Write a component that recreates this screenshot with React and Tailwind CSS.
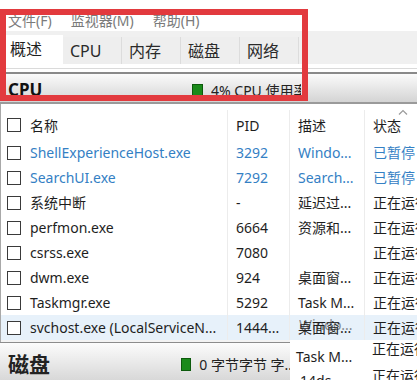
import React from "react";

const rows = [
  { name: "ShellExperienceHost.exe", pid: "3292", desc: "Windo...", status: "已暂停", blue: true },
  { name: "SearchUI.exe", pid: "7292", desc: "Search...", status: "已暂停", blue: true },
  { name: "系统中断", pid: "-", desc: "延迟过...", status: "正在运行" },
  { name: "perfmon.exe", pid: "6664", desc: "资源和...", status: "正在运行" },
  { name: "csrss.exe", pid: "7080", desc: "", status: "正在运行" },
  { name: "dwm.exe", pid: "924", desc: "桌面窗...", status: "正在运行" },
  { name: "Taskmgr.exe", pid: "5292", desc: "Task M...", status: "正在运行" },
  { name: "svchost.exe (LocalServiceN...", pid: "1444...", desc: "桌面窗...", status: "正在运行", sel: true, ghost: "Windo..." },
];

function Box() {
  return <span className="w-[14px] h-[14px] border border-[#3a3a3a] bg-white shrink-0" />;
}

export default function App() {
  return (
    <div className="relative w-[417px] h-[380px] overflow-hidden bg-white font-[Noto_Sans,Noto_Sans_CJK_SC,sans-serif] text-[#1e1e1e]">
      {/* menu */}
      <div className="h-[31px] flex items-end pb-[1px] pl-[8px] gap-[19px] text-[14px] leading-[18px] text-[#7a7a7a]">
        <span>文件(F)</span>
        <span>监视器(M)</span>
        <span>帮助(H)</span>
      </div>
      {/* tabs */}
      <div className="h-[33px] bg-[#f0f0f0] flex items-end pl-[5px]">
        <div className="w-[58px] h-[29px] bg-white flex items-center pl-[5px] pb-[2px] text-[16px]">概述</div>
        {["CPU", "内存", "磁盘", "网络"].map((t) => (
          <div key={t} className="w-[59px] h-[27px] border-r border-[#dcdcdc] bg-[#eeeeee] flex items-center pl-[7px] text-[16px] text-[#2a2a2a]">
            {t}
          </div>
        ))}
      </div>
      <div className="h-[4px] bg-white" />
      <div className="h-[1px] bg-[#dadada]" />
      <div className="h-[3px] bg-white" />
      <div className="h-[2px] bg-[#8a8a8a]" />
      {/* CPU header */}
      <div className="h-[28px] bg-gradient-to-b from-[#fbfbfb] to-[#d4d4d4] flex items-center pt-[4px]">
        <span className="pl-[8px] w-[192px] font-bold text-[17px] text-[#111]">CPU</span>
        <span className="w-[11px] h-[12px] bg-[#1a8a1a] border border-[#0c5a0c]" />
        <span className="ml-[8px] w-[90px] overflow-hidden whitespace-nowrap text-[14px] text-[#222]">4% CPU 使用率</span>
      </div>
      <div className="h-[2px] bg-[#9a9a9a]" />
      {/* list */}
      <div className="relative border-l border-[#a8a8a8] text-[14px]">
        <div className="h-[36px] flex pt-[6px]">
          <div className="w-[226px] flex items-center pl-[6px] gap-[9px]">
            <Box />
            <span>名称</span>
          </div>
          <div className="w-[62px] border-l border-[#ececec] flex items-center pl-[8px]">PID</div>
          <div className="w-[75px] border-l border-[#ececec] flex items-center pl-[8px]">描述</div>
          <div className="flex-1 border-l border-[#ececec] flex items-center pl-[8px] whitespace-nowrap">状态</div>
        </div>
        <svg className="absolute left-[397px] top-[5px]" width="10" height="6" viewBox="0 0 10 6">
          <path d="M1 5.5 L5 1.5 L9 5.5" fill="none" stroke="#9a9a9a" strokeWidth="1.2" />
        </svg>
        {rows.map((r) => (
          <div key={r.name} className={`h-[25px] flex ${r.sel ? "bg-[#e7f1fa]" : ""} ${r.blue ? "text-[#3480c4]" : ""}`}>
            <div className="w-[226px] flex items-center pl-[6px] gap-[9px] whitespace-nowrap overflow-hidden">
              <Box />
              <span>{r.name}</span>
            </div>
            <div className="w-[62px] border-l border-[#ececec] flex items-center pl-[8px]">{r.pid}</div>
            <div className="w-[75px] border-l border-[#ececec] flex items-center pl-[8px] whitespace-nowrap">
              <span className="relative">
                {r.desc}
                {r.ghost && <span className="absolute left-[1px] top-[-3px] opacity-50">{r.ghost}</span>}
              </span>
            </div>
            <div className="flex-1 border-l border-[#ececec] flex items-center pl-[8px] whitespace-nowrap overflow-hidden">{r.status}</div>
          </div>
        ))}
      </div>
      {/* bottom */}
      <div className="h-[40px] flex">
        <div className="w-[290px] flex flex-col">
          <div className="h-[6px] bg-[#f3f3f3] border-l border-[#a8a8a8]" />
          <div className="h-[3px] bg-[#8c8c8c]" />
          <div className="flex-1 bg-gradient-to-b from-[#fcfcfc] to-[#d8d8d8] flex items-center pt-[6px]">
            <span className="pl-[8px] w-[192px] font-bold text-[21px] text-[#222]">磁盘</span>
            <span className="w-[11px] h-[13px] bg-[#1a8a1a] border border-[#0c5a0c]" />
            <span className="ml-[8px] whitespace-nowrap overflow-hidden text-[14px] text-[#222]">0 字节字节 字...</span>
          </div>
        </div>
        <div className="flex-1 bg-white relative text-[14px] whitespace-nowrap">
          <span className="absolute left-[6px] top-[6px]">Task M...</span>
          <span className="absolute left-[82px] top-[-2px]">正在运行</span>
          <span className="absolute left-[10px] top-[30px]">14ds...</span>
          <span className="absolute left-[82px] top-[25px]">正在运行</span>
        </div>
      </div>
      {/* red highlight box */}
      <div className="absolute left-0 top-[9px] w-[308px] h-[92px] border-[6px] border-[#e23a3e]" />
    </div>
  );
}
